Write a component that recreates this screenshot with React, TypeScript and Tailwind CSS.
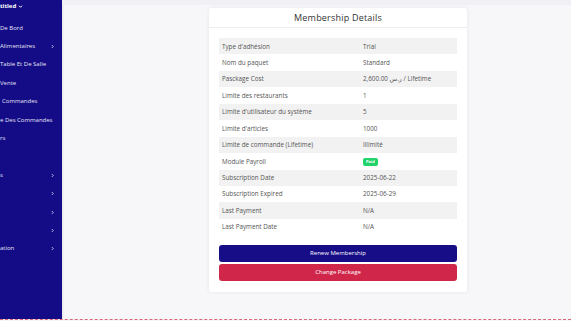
import React from "react";

const FONT = { fontFamily: '"Open Sans", "DejaVu Sans", sans-serif' };

// the sidebar is scrolled sideways in the screenshot: only the tail of each label shows
const menu: { label: string; arrow?: boolean; indent?: number }[] = [
  { label: "De Bord" },
  { label: "Alimentaires", arrow: true },
  { label: "Table Et De Salle" },
  { label: "Vente" },
  { label: "Commandes", indent: 2 },
  { label: "e Des Commandes" },
  { label: "rs" },
  { label: "" },
  { label: "s", arrow: true },
  { label: "", arrow: true },
  { label: "", arrow: true },
  { label: "", arrow: true },
  { label: "ation", arrow: true },
];

const rows: { label: string; value: React.ReactNode }[] = [
  { label: "Type d'adhésion", value: "Trial" },
  { label: "Nom du paquet", value: "Standard" },
  { label: "Pasckage Cost", value: "2,600.00 ر.س / Lifetime" },
  { label: "Limite des restaurants", value: "1" },
  { label: "Limite d'utilisateur du système", value: "5" },
  { label: "Limite d'articles", value: "1000" },
  { label: "Limite de commande (Lifetime)", value: "Illimité" },
  {
    label: "Module Payroll",
    value: (
      <span className="inline-flex h-[8px] items-center rounded-[2px] bg-[#22d36b] px-[3px] text-[4px] font-bold text-white">
        Paid
      </span>
    ),
  },
  { label: "Subscription Date", value: "2025-06-22" },
  { label: "Subscription Expired", value: "2025-06-29" },
  { label: "Last Payment", value: "N/A" },
  { label: "Last Payment Date", value: "N/A" },
];

export default function App() {
  return (
    <div className="flex h-[321px] w-[571px] flex-col overflow-hidden bg-[#f7f7fa]" style={FONT}>
      <div className="flex h-[319px]">
        <aside className="flex w-[62px] shrink-0 flex-col bg-[#140c86] text-[6px] text-[#e6e4f5] shadow-[1px_0_2px_rgba(0,0,0,0.08)]">
          <div className="flex h-[12px] items-center font-bold text-white">
            titled
            <svg viewBox="0 0 10 10" className="ml-[2px] h-[5px] w-[5px]" fill="none" stroke="currentColor" strokeWidth="2">
              <path d="M2 3.5l3 3 3-3" />
            </svg>
          </div>
          <div className="h-[7px]" />
          {menu.map((m, i) => (
            <div key={i} className="flex h-[18.4px] items-center pr-[7px]">
              <span className="flex-1 whitespace-nowrap" style={{ paddingLeft: m.indent ?? 0 }}>
                {m.label}
              </span>
              {m.arrow && (
                <svg viewBox="0 0 10 10" className="h-[5px] w-[5px]" fill="none" stroke="currentColor" strokeWidth="1.5">
                  <path d="M3.5 2l3 3-3 3" />
                </svg>
              )}
            </div>
          ))}
        </aside>

        <main className="flex flex-1 flex-col">
          <div className="h-[5px] bg-[#f1f1f5]" />
          <div className="ml-[147px] mt-[3px] w-[258px] rounded-[3px] bg-white shadow-[0_0_4px_rgba(0,0,0,0.07)]">
            <div className="flex h-[20px] items-center justify-center border-b border-[#eeeeee] text-[9px] font-medium tracking-[0.2px] text-[#333]">
              Membership Details
            </div>
            <div className="px-[10px] pb-[11px] pt-[10px]">
              <div className="flex flex-col text-[6.3px] text-[#555]">
                {rows.map((r, i) => (
                  <div
                    key={r.label}
                    className={`flex h-[16.45px] items-center ${i % 2 === 0 ? "bg-[#f2f2f2]" : "bg-white"}`}
                  >
                    <div className="w-[144px] pl-[3px]">{r.label}</div>
                    <div className="flex-1">{r.value}</div>
                  </div>
                ))}
              </div>
              <div className="mt-[10px] flex flex-col gap-[2px]">
                <button className="h-[17px] rounded-[3px] bg-[#160d87] text-[6px] font-medium text-white">
                  Renew Membership
                </button>
                <button className="h-[17px] rounded-[3px] bg-[#d0264a] text-[6px] font-medium text-white">
                  Change Package
                </button>
              </div>
            </div>
          </div>
        </main>
      </div>
      <div className="border-t-[1.5px] border-dashed border-[#d9667a]" />
    </div>
  );
}
